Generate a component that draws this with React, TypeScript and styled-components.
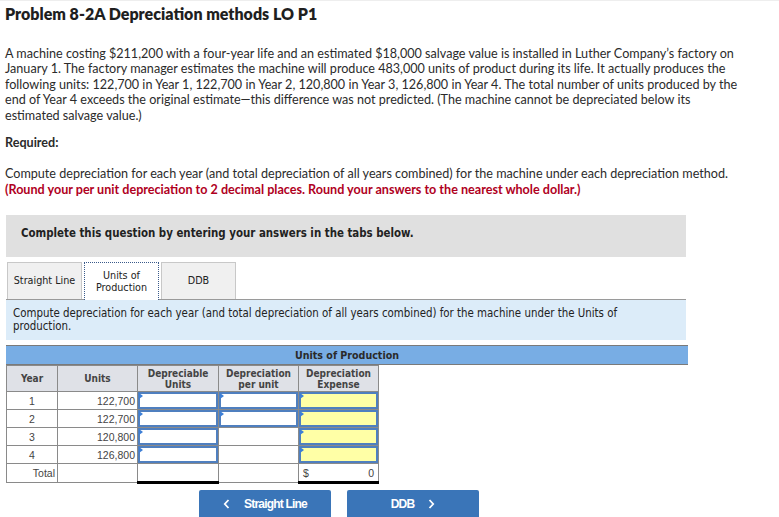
import React from 'react';
import styled, { createGlobalStyle } from 'styled-components';

const GlobalStyle = createGlobalStyle`
  body {
    margin: 0;
    background: #fff;
  }
`;

const color = {
  text: '#2b2b2b',
  red: '#b0001e',
  grayBox: '#e0e0e0',
  tabBg: '#f0f0f0',
  tabBorder: '#c8c8c8',
  infoBg: '#dcecf9',
  bar: '#78ade4',
  headBg: '#dfe1e7',
  cellBorder: '#8a8a8a',
  inputBorder: '#4f7fbf',
  yellow: '#ffffa6',
  button: '#3a75b8',
};

const tahoma = `"DejaVu Sans Condensed", "DejaVu Sans", Verdana, sans-serif`;

const StyledPage = styled.div`
  box-sizing: border-box;
  width: 779px;
  min-height: 517px;
  padding: 0 5px;
  border-top: 1px solid #eee;
  font-family: Lato, 'Open Sans', sans-serif;
  color: ${color.text};
`;

const StyledTitle = styled.h1`
  margin: 3px 0 0;
  font-size: 16px;
  line-height: 20px;
  font-weight: 800;
  color: #1f1f1f;
`;

const StyledParagraph = styled.p<{ $top: number }>`
  margin: ${(p) => p.$top}px 0 0;
  padding-right: 34px;
  font-size: 12.6px;
  line-height: 15.4px;
`;

const StyledRequired = styled.div`
  margin-top: 12px;
  font-size: 12.6px;
  line-height: 15.4px;
  font-weight: 700;
`;

const StyledRed = styled.span`
  color: ${color.red};
  font-weight: 700;
`;

const StyledQuestionBox = styled.div`
  box-sizing: border-box;
  width: 680px;
  height: 42px;
  margin: 18px 0 0 1px;
  padding: 11px 0 0 15px;
  background: ${color.grayBox};
  font-family: ${tahoma};
  font-size: 11.4px;
  font-weight: 700;
  color: #222;
`;

const StyledTabs = styled.div`
  display: flex;
  align-items: flex-end;
  gap: 2px;
  margin: 5px 0 0 2px;
`;

const StyledTab = styled.div<{ $active?: boolean }>`
  box-sizing: border-box;
  width: 75px;
  height: ${(p) => (p.$active ? 38 : 37)}px;
  display: flex;
  align-items: center;
  justify-content: center;
  text-align: center;
  background: ${(p) => (p.$active ? '#fff' : color.tabBg)};
  border: 1px ${(p) => (p.$active ? 'dotted #3a5a8a' : `solid ${color.tabBorder}`)};
  border-bottom: none;
  font-family: ${tahoma};
  font-size: 10.7px;
  line-height: 12px;
  color: #222;
  margin-bottom: ${(p) => (p.$active ? -1 : 0)}px;
  position: relative;
  z-index: ${(p) => (p.$active ? 1 : 0)};
`;

const StyledInfoPanel = styled.div`
  box-sizing: border-box;
  width: 680px;
  height: 41px;
  margin-left: 1px;
  padding: 7px 0 0 7px;
  border-top: 1px solid #9a9a9a;
  background: ${color.infoBg};
  font-family: ${tahoma};
  font-size: 11.4px;
  line-height: 12.6px;
  color: #222;
`;

const StyledBar = styled.div`
  box-sizing: border-box;
  width: 682px;
  height: 20px;
  margin: 5px 0 0 1px;
  border-top: 1px solid #7a7a7a;
  border-bottom: 1px solid #7a7a7a;
  background: ${color.bar};
  font-family: ${tahoma};
  font-size: 10.6px;
  line-height: 18px;
  font-weight: 700;
  text-align: center;
  color: #2a2a2a;
`;

const StyledTable = styled.table`
  margin-left: 1px;
  border-collapse: collapse;
  table-layout: fixed;
  font-family: ${tahoma};
  font-size: 10px;
  color: #333;
`;

const StyledHeadCell = styled.th<{ $width: number }>`
  width: ${(p) => p.$width}px;
  height: 25px;
  padding: 0;
  border: 1px solid ${color.cellBorder};
  background: ${color.headBg};
  font-weight: 700;
  line-height: 11px;
  color: #444;
  text-align: center;
`;

const StyledCell = styled.td<{ $align?: string; $thick?: boolean; $topDark?: boolean }>`
  height: 17px;
  padding: 0 2px;
  border: 1px solid ${color.cellBorder};
  ${(p) => (p.$thick ? 'border-bottom: 3px solid #000;' : '')}
  ${(p) => (p.$topDark ? 'border-top: 1px solid #222;' : '')}
  text-align: ${(p) => p.$align || 'left'};
  font-family: 'Liberation Sans', Arial, sans-serif;
  font-size: 10.5px;
  color: #444;
  background: #fff;
`;

const StyledInputCell = styled.td`
  height: 17px;
  padding: 0;
  border: 1px solid ${color.cellBorder};
`;

const StyledInput = styled.div<{ $yellow?: boolean }>`
  position: relative;
  box-sizing: border-box;
  height: 17px;
  border: 2px solid ${color.inputBorder};
  background: ${(p) => (p.$yellow ? color.yellow : '#fff')};

  &::before {
    content: '';
    position: absolute;
    left: -1px;
    top: -1px;
    border-top: 3px solid transparent;
    border-bottom: 3px solid transparent;
    border-left: 4px solid #3d7fd6;
  }
`;

const StyledTotal = styled.div`
  display: flex;
  justify-content: space-between;
  padding: 0 2px;
`;

const StyledNav = styled.div`
  display: flex;
  gap: 16px;
  margin: 6px 0 0 194px;
`;

const StyledNavButton = styled.div`
  box-sizing: border-box;
  width: 132px;
  height: 27px;
  display: flex;
  align-items: center;
  justify-content: center;
  gap: 14px;
  border-radius: 2px 2px 0 0;
  background: ${color.button};
  font-family: 'Liberation Sans', Arial, sans-serif;
  font-size: 12px;
  letter-spacing: -0.8px;
  font-weight: 700;
  color: #fff;
`;

const Chevron = ({ dir }: { dir: 'left' | 'right' }) => (
  <svg width='7' height='10' viewBox='0 0 7 10'>
    <path
      d={dir === 'left' ? 'M5.5 1 L1.8 5 L5.5 9' : 'M1.5 1 L5.2 5 L1.5 9'}
      fill='none'
      stroke='#fff'
      strokeWidth='1.8'
    />
  </svg>
);

const rows = [
  { year: '1', units: '122,700', perUnit: true },
  { year: '2', units: '122,700', perUnit: true },
  { year: '3', units: '120,800', perUnit: false },
  { year: '4', units: '126,800', perUnit: false },
];

const App = () => (
  <StyledPage>
    <GlobalStyle />
    <StyledTitle>Problem 8-2A Depreciation methods LO P1</StyledTitle>
    <StyledParagraph $top={22}>
      A machine costing $211,200 with a four-year life and an estimated $18,000 salvage value is
      installed in Luther Company’s factory on January 1. The factory manager estimates the machine
      will produce 483,000 units of product during its life. It actually produces the following
      units: 122,700 in Year 1, 122,700 in Year 2, 120,800 in Year 3, 126,800 in Year 4. The total
      number of units produced by the end of Year 4 exceeds the original estimate—this difference
      was not predicted. (The machine cannot be depreciated below its estimated salvage value.)
    </StyledParagraph>
    <StyledRequired>Required:</StyledRequired>
    <StyledParagraph $top={16}>
      Compute depreciation for each year (and total depreciation of all years combined) for the
      machine under each depreciation method.
      <br />
      <StyledRed>
        (Round your per unit depreciation to 2 decimal places. Round your answers to the nearest
        whole dollar.)
      </StyledRed>
    </StyledParagraph>
    <StyledQuestionBox>
      Complete this question by entering your answers in the tabs below.
    </StyledQuestionBox>
    <StyledTabs>
      <StyledTab>Straight Line</StyledTab>
      <StyledTab $active>
        Units of
        <br />
        Production
      </StyledTab>
      <StyledTab>DDB</StyledTab>
    </StyledTabs>
    <StyledInfoPanel>
      Compute depreciation for each year (and total depreciation of all years combined) for the
      machine under the Units of
      <br />
      production.
    </StyledInfoPanel>
    <StyledBar>Units of Production</StyledBar>
    <StyledTable>
      <thead>
        <tr>
          <StyledHeadCell $width={50}>Year</StyledHeadCell>
          <StyledHeadCell $width={79}>Units</StyledHeadCell>
          <StyledHeadCell $width={80}>
            Depreciable
            <br />
            Units
          </StyledHeadCell>
          <StyledHeadCell $width={79}>
            Depreciation
            <br />
            per unit
          </StyledHeadCell>
          <StyledHeadCell $width={79}>
            Depreciation
            <br />
            Expense
          </StyledHeadCell>
        </tr>
      </thead>
      <tbody>
        {rows.map((row) => (
          <tr key={row.year}>
            <StyledCell $align='center'>{row.year}</StyledCell>
            <StyledCell $align='right'>{row.units}</StyledCell>
            <StyledInputCell>
              <StyledInput />
            </StyledInputCell>
            {row.perUnit ? (
              <StyledInputCell>
                <StyledInput />
              </StyledInputCell>
            ) : (
              <StyledCell />
            )}
            <StyledInputCell>
              <StyledInput $yellow />
            </StyledInputCell>
          </tr>
        ))}
        <tr>
          <StyledCell $align='right'>Total</StyledCell>
          <StyledCell />
          <StyledCell $thick $topDark />
          <StyledCell />
          <StyledCell $thick>
            <StyledTotal>
              <span>$</span>
              <span>0</span>
            </StyledTotal>
          </StyledCell>
        </tr>
      </tbody>
    </StyledTable>
    <StyledNav>
      <StyledNavButton>
        <Chevron dir='left' />
        Straight Line
      </StyledNavButton>
      <StyledNavButton>
        DDB
        <Chevron dir='right' />
      </StyledNavButton>
    </StyledNav>
  </StyledPage>
);

export default App;
